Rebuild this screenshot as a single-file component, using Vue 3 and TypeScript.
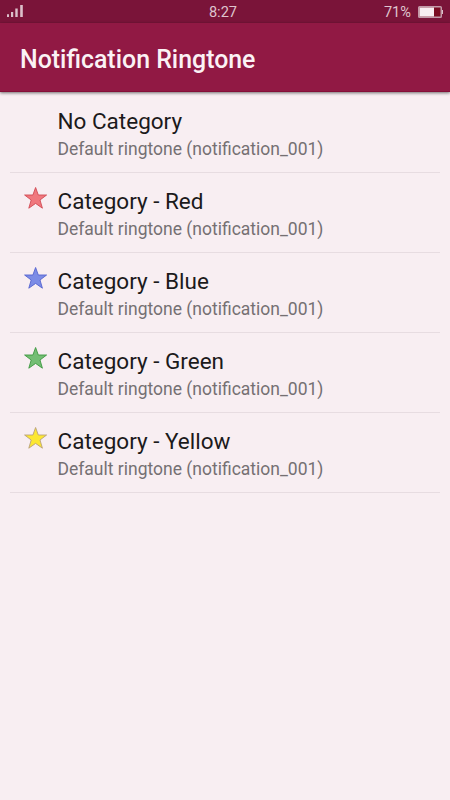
<script setup lang="ts">
interface Row {
  title: string
  fill?: string
  stroke?: string
}

const rows: Row[] = [
  { title: 'No Category' },
  { title: 'Category - Red', fill: '#f0787e', stroke: '#d04a54' },
  { title: 'Category - Blue', fill: '#7c8ce6', stroke: '#5563cf' },
  { title: 'Category - Green', fill: '#74be74', stroke: '#3d973f' },
  { title: 'Category - Yellow', fill: '#fce732', stroke: '#b9a07a' },
]
</script>

<template>
  <div class="screen">
    <div class="status">
      <svg class="signal" width="18" height="12" viewBox="0 0 18 12">
        <path d="M1 9.300h2V12H1zM5 7h2.200v5H5zM9.300 3.500h2.400V12H9.300zM14.200 0h2.600v12h-2.600z" fill="#dcc0ca" />
      </svg>
      <span class="clock">8:27</span>
      <div class="power">
        <span>71%</span>
        <svg width="25" height="12" viewBox="0 0 25 12">
          <rect x=".75" y=".75" width="22.500" height="10.500" rx=".8" fill="#7a0b22" stroke="#c29aa9" stroke-width="1.500" />
          <rect x="1.500" y="1.500" width="14.500" height="9" fill="#f8eef2" />
          <rect x="24" y="4" width="1" height="4" fill="#dcc0ca" />
        </svg>
      </div>
    </div>
    <header class="bar"><h1>Notification Ringtone</h1></header>
    <ul class="list">
      <li v-for="row in rows" :key="row.title" class="row">
        <div class="icon">
          <svg v-if="row.fill" width="24" height="24" viewBox="-.6 0 24 24">
            <path d="M12 1.500L14.700 9H23L16.400 14 18.800 22.200 12 17.400 5.200 22.200 7.600 14 1 9H9.300z" :fill="row.fill" :stroke="row.stroke" stroke-width=".9" />
          </svg>
        </div>
        <div class="text">
          <div class="title">{{ row.title }}</div>
          <div class="sub">Default ringtone (notification_001)</div>
        </div>
      </li>
    </ul>
  </div>
</template>

<style>
body { margin: 0; }
</style>

<style scoped>
.screen { width: 450px; height: 800px; overflow: hidden; background: #f8eef2; font-family: Roboto, sans-serif; }
.status { height: 23px; background: #7a1439; display: grid; grid-template-columns: 1fr auto 1fr; align-items: center; padding: 0 7px 0 6px; color: #dfc4ce; font-size: 14.6px; box-sizing: border-box; }
.signal { position: relative; top: -.5px; }
.clock { margin-right: 3px; }
.power { display: flex; justify-content: flex-end; align-items: center; gap: 7px; }
.bar { height: 69px; background: #911944; display: flex; align-items: center; padding: 6px 0 0 20px; box-sizing: border-box; border-bottom: 1px solid #850f39; box-shadow: 0 1px 3px rgba(0, 0, 0, .55); }
h1 { margin: 0; color: #fbf2f5; font-size: 24.9px; font-weight: 500; line-height: 30px; white-space: nowrap; }
.list { list-style: none; margin: 0; padding: 1px 10px 0; }
.row { height: 79px; border-bottom: 1px solid #e7dce1; display: flex; }
.icon { width: 47.500px; padding: 12.500px 0 0 13px; box-sizing: border-box; }
.text { padding-top: 14px; white-space: nowrap; }
.title { font-size: 22.5px; line-height: 29px; color: #1c1a1b; }
.sub { margin-top: 2px; font-size: 17.5px; line-height: 23px; color: #757073; }
</style>
